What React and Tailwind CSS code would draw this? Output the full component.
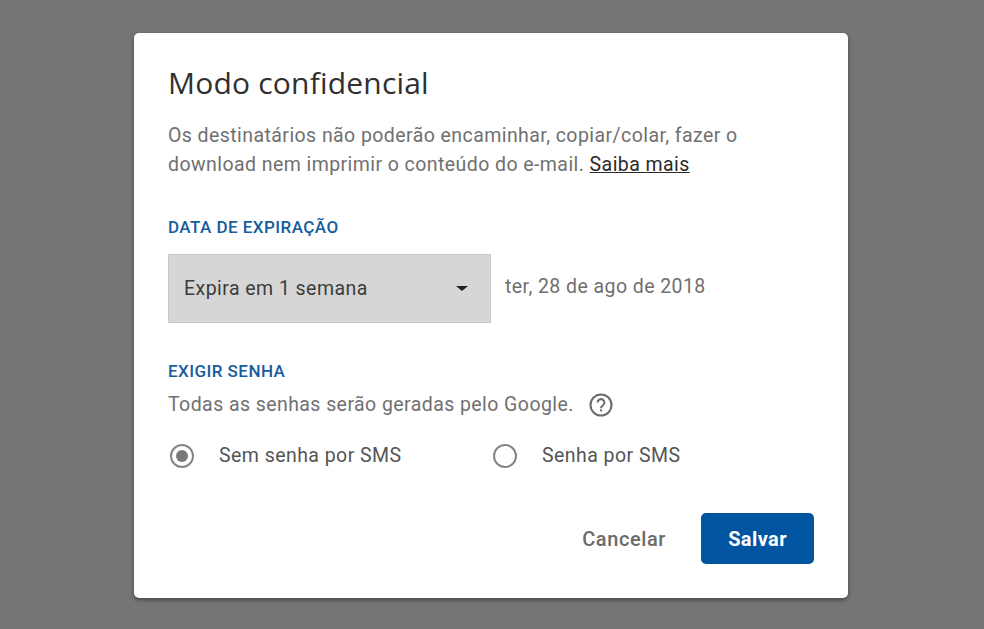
const App = () => {
  return (
    <div className="flex h-[629px] w-[984px] overflow-hidden bg-[#757575] pl-[134px] pt-[33px] font-['Roboto',sans-serif]">
      <div className="h-[565px] w-[714px] rounded-[5px] bg-white pl-[34px] pr-[34px] pt-[32px] shadow-[0_2px_4px_rgba(0,0,0,0.4)]">
        <h1 className="font-['Open_Sans',sans-serif] text-[30px] leading-[36px] tracking-[0.2px] text-[#303030]">
          Modo confidencial
        </h1>

        <p className="mt-[21px] text-[19.5px] leading-[28.5px] tracking-[0.43px] text-[#707070]">
          Os destinatários não poderão encaminhar, copiar/colar, fazer o
          <br />
          download nem imprimir o conteúdo do e-mail.{" "}
          <span className="text-[#2a2a2a] underline">Saiba mais</span>
        </p>

        <h2 className="mt-[36px] text-[17px] font-medium leading-[24px] tracking-[0.45px] text-[#155d9e]">
          DATA DE EXPIRAÇÃO
        </h2>

        <div className="mt-[15px] flex items-center">
          <div className="flex h-[69px] w-[323px] items-center justify-between border border-[#c9c9c9] bg-[#d6d6d6] pl-[15px] pr-[22px]">
            <span className="text-[19.5px] tracking-[0.45px] text-[#3c3c3c]">Expira em 1 semana</span>
            <span className="h-0 w-0 border-x-[6px] border-t-[5px] border-x-transparent border-t-[#222222]" />
          </div>
          <span className="mb-[4px] ml-[14px] text-[19.5px] tracking-[0.43px] text-[#707070]">ter, 28 de ago de 2018</span>
        </div>

        <h2 className="mt-[36px] text-[17px] font-medium leading-[24px] tracking-[0.45px] text-[#155d9e]">
          EXIGIR SENHA
        </h2>

        <div className="mt-[10px] flex h-[24px] items-center">
          <span className="text-[19.5px] tracking-[0.43px] text-[#707070]">
            Todas as senhas serão geradas pelo Google.
          </span>
          <svg className="ml-[14px]" width="26" height="26" viewBox="0 0 26 26" fill="none">
            <circle cx="13" cy="13" r="10.5" stroke="#6a6a6a" strokeWidth="2" />
            <path d="M9.6 10.6a3.4 3.4 0 1 1 5.4 2.7c-1.2.9-2 1.5-2 3" stroke="#6a6a6a" strokeWidth="2" />
            <rect x="12" y="17.4" width="2" height="2" fill="#6a6a6a" />
          </svg>
        </div>

        <div className="mt-[26px] flex h-[26px] items-center">
          <div className="flex w-[323px] items-center pl-[2px]">
            <span className="flex h-[24px] w-[24px] items-center justify-center rounded-full border-2 border-[#858585]">
              <span className="h-[12px] w-[12px] rounded-full bg-[#7a7a7a]" />
            </span>
            <span className="ml-[25px] text-[19.5px] tracking-[0.45px] text-[#555555]">Sem senha por SMS</span>
          </div>
          <div className="flex items-center pl-[2px]">
            <span className="h-[24px] w-[24px] rounded-full border-2 border-[#858585]" />
            <span className="ml-[25px] text-[19.5px] tracking-[0.45px] text-[#555555]">Senha por SMS</span>
          </div>
        </div>

        <div className="mt-[44px] flex items-center justify-end">
          <span className="text-[20px] font-medium tracking-[0.6px] text-[#6b6b6b]">Cancelar</span>
          <button className="ml-[35px] h-[51px] w-[113px] rounded-[5px] bg-[#01549f] text-[20px] font-bold tracking-[0.4px] text-white">
            Salvar
          </button>
        </div>
      </div>
    </div>
  );
};

export default App;
